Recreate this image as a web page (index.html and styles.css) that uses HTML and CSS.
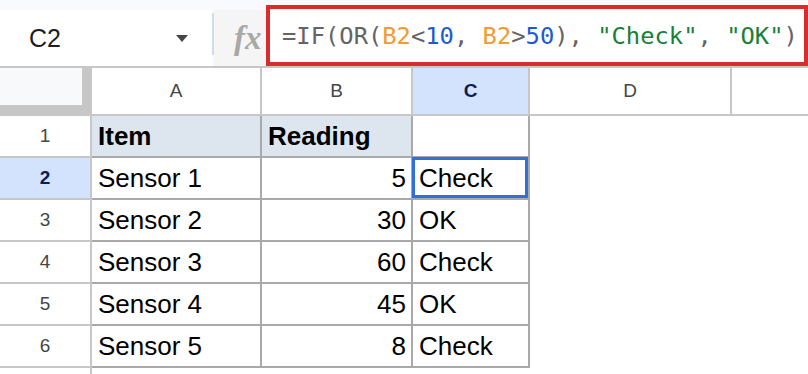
FILE: index.html
```html
<!DOCTYPE html>
<html>
<head>
<meta charset="utf-8">
<link rel="stylesheet" href="styles.css">
</head>
<body>
<div class="sheet">
  <div class="toolbar">
    <div class="namebox"><span class="ref">C2</span><span class="caret"></span></div>
    <div class="sep"></div>
    <div class="fx">fx</div>
    <div class="formula"><span class="f-op">=IF(OR(</span><span class="f-ref">B2</span><span class="f-op">&lt;</span><span class="f-num">10</span><span class="f-op">, </span><span class="f-ref">B2</span><span class="f-op">&gt;</span><span class="f-num">50</span><span class="f-op">), </span><span class="f-str">"Check"</span><span class="f-op">, </span><span class="f-str">"OK"</span><span class="f-op">)</span></div>
  </div>
  <div class="grid">
    <div class="corner"><div class="corner-box"></div></div>
    <div class="colh">A</div>
    <div class="colh">B</div>
    <div class="colh sel">C</div>
    <div class="colh">D</div>
    <div class="colh last"></div>

    <div class="rowh">1</div>
    <div class="cell hd">Item</div>
    <div class="cell hd">Reading</div>
    <div class="cell"></div>
    <div class="blank"></div>
    <div class="blank"></div>

    <div class="rowh sel">2</div>
    <div class="cell">Sensor 1</div>
    <div class="cell num">5</div>
    <div class="cell active">Check</div>
    <div class="blank"></div>
    <div class="blank"></div>

    <div class="rowh">3</div>
    <div class="cell">Sensor 2</div>
    <div class="cell num">30</div>
    <div class="cell">OK</div>
    <div class="blank"></div>
    <div class="blank"></div>

    <div class="rowh">4</div>
    <div class="cell">Sensor 3</div>
    <div class="cell num">60</div>
    <div class="cell">Check</div>
    <div class="blank"></div>
    <div class="blank"></div>

    <div class="rowh">5</div>
    <div class="cell">Sensor 4</div>
    <div class="cell num">45</div>
    <div class="cell">OK</div>
    <div class="blank"></div>
    <div class="blank"></div>

    <div class="rowh">6</div>
    <div class="cell">Sensor 5</div>
    <div class="cell num">8</div>
    <div class="cell">Check</div>
    <div class="blank"></div>
    <div class="blank"></div>

    <div class="rowh"></div>
    <div class="blank"></div>
    <div class="blank"></div>
    <div class="blank"></div>
    <div class="blank"></div>
    <div class="blank"></div>
  </div>
</div>
</body>
</html>
```

FILE: styles.css
```css
html, body {
  margin: 0;
  padding: 0;
  background: #fff;
  overflow: hidden;
}
body {
  font-family: "Liberation Sans", Arial, sans-serif;
}
.sheet {
  width: 808px;
  height: 374px;
  overflow: hidden;
}
.toolbar {
  display: flex;
  height: 56px;
  padding-top: 10px;
  background: #f8fafd;
  border-bottom: 2px solid #c7c7c7;
}
.namebox {
  width: 212px;
  box-sizing: border-box;
  background: #fff;
  display: flex;
  align-items: center;
  padding-left: 29px;
  font-size: 25px;
  color: #1f1f1f;
}
.caret {
  margin-left: auto;
  margin-right: 24px;
  width: 0;
  height: 0;
  border-left: 6px solid transparent;
  border-right: 6px solid transparent;
  border-top: 7px solid #444746;
}
.sep {
  width: 2px;
  height: 42px;
  margin-top: 3px;
  background: #cfdcec;
}
.fx {
  width: 52px;
  box-sizing: border-box;
  background: #f5f5f5;
  display: flex;
  align-items: center;
  padding-left: 20px;
  font-family: "Liberation Serif", serif;
  font-style: italic;
  font-weight: bold;
  font-size: 33px;
  color: #a8a8a8;
}
.formula {
  flex: 1;
  margin-top: -5px;
  border: 4px solid #d92d2d;
  background: #fff;
  display: flex;
  align-items: center;
  padding-left: 12px;
  font-family: "DejaVu Sans Mono", "Liberation Mono", monospace;
  font-size: 23.8px;
  white-space: pre;
  color: #646464;
}
.f-op { color: #646464; }
.f-ref { color: #f29a33; }
.f-num { color: #1a5bd3; }
.f-str { color: #188038; }

.grid {
  display: grid;
  grid-template-columns: 92px 170px 151px 117px 202px 1fr;
  grid-template-rows: 48px repeat(7, 42px);
}
.grid > div {
  box-sizing: border-box;
}
.corner {
  background: #c7c7c7;
}
.corner-box {
  width: 82px;
  height: 37px;
  background: #f8f9fa;
}
.colh {
  display: flex;
  align-items: center;
  justify-content: center;
  border-right: 2px solid #c7c7c7;
  border-bottom: 2px solid #c7c7c7;
  font-size: 19px;
  color: #444746;
  background: #fff;
}
.colh.last {
  border-right: 0;
}
.colh.sel,
.rowh.sel {
  background: #d3e3fd;
  color: #0b1d51;
  font-weight: bold;
}
.rowh {
  display: flex;
  align-items: center;
  justify-content: center;
  border-right: 2px solid #c7c7c7;
  border-bottom: 2px solid #c7c7c7;
  font-size: 19px;
  color: #444746;
}
.cell {
  display: flex;
  align-items: center;
  padding: 0 5px 0 6px;
  font-size: 26px;
  color: #000;
  border-right: 2px solid #a9a9a9;
  border-bottom: 2px solid #a9a9a9;
  white-space: nowrap;
}
.cell.num {
  justify-content: flex-end;
}
.cell.hd {
  background: #dde5ef;
  font-weight: bold;
}
.cell.active {
  position: relative;
}
.cell.active::after {
  content: "";
  position: absolute;
  left: -1px;
  top: -1px;
  right: 0;
  bottom: 0;
  border: 3px solid #2f6fde;
}
```
